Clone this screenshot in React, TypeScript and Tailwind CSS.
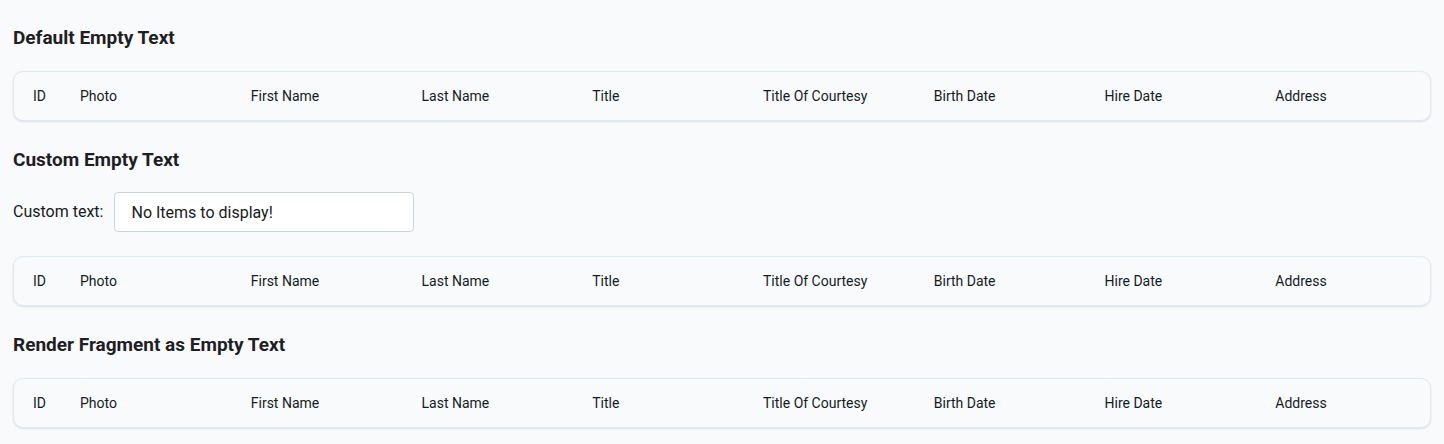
const COLUMNS = [
  "ID",
  "Photo",
  "First Name",
  "Last Name",
  "Title",
  "Title Of Courtesy",
  "Birth Date",
  "Hire Date",
  "Address",
];

function EmptyGrid() {
  return (
    <div className="rounded-[10px] border border-[#e2e8f0] bg-[#f8fafc] pr-1 shadow-[0_1px_2px_rgba(15,23,42,0.12)]">
      <div className="grid h-12 grid-cols-[46px_repeat(8,minmax(0,1fr))] items-center">
        {COLUMNS.map((c, i) => (
          <div
            key={c}
            className={`whitespace-nowrap text-[14px] text-[#161a24] ${i === 0 ? "pl-[19px]" : "px-5"}`}
          >
            {c}
          </div>
        ))}
      </div>
    </div>
  );
}

function Heading({ children }: { children: React.ReactNode }) {
  return <h3 className="text-[19px] font-bold leading-7 text-[#1e1e24]">{children}</h3>;
}

export default function App() {
  return (
    <div
      className="min-h-screen bg-[#f9fafb] px-[13px] pt-6 pb-4"
      style={{ fontFamily: "Roboto, 'Liberation Sans', sans-serif" }}
    >
      <Heading>Default Empty Text</Heading>
      <div className="mt-[19px]">
        <EmptyGrid />
      </div>

      <div className="mt-[25px]">
        <Heading>Custom Empty Text</Heading>
      </div>
      <div className="mt-[18px] flex items-center gap-[11px]">
        <label className="text-[16px] text-[#161a24]">Custom text:</label>
        <input
          defaultValue="No Items to display!"
          className="h-10 w-[300px] rounded-[4px] border border-[#cbd5e1] bg-white px-4 text-[16px] text-[#161a24] outline-none"
        />
      </div>
      <div className="mt-6">
        <EmptyGrid />
      </div>

      <div className="mt-[25px]">
        <Heading>Render Fragment as Empty Text</Heading>
      </div>
      <div className="mt-[19px]">
        <EmptyGrid />
      </div>
    </div>
  );
}
